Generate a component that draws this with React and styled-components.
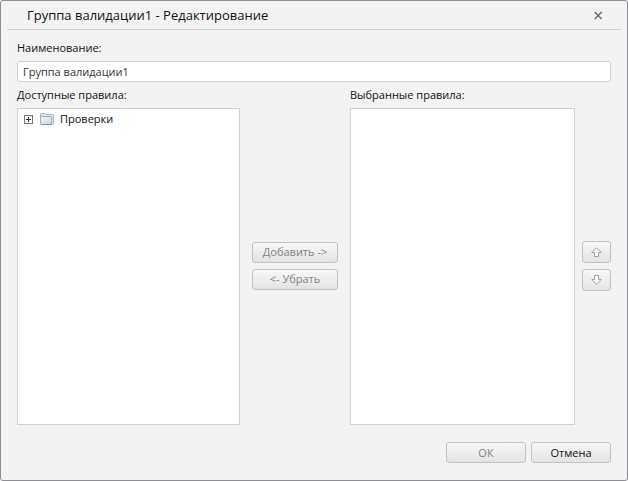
import { useState } from "react";
import styled, { createGlobalStyle } from "styled-components";

const color_page = "#f3f3f3";
const color_frame = "#8b8e96";
const color_line = "#d0d3d5";
const color_button_border = "#c0c3c6";
const color_text = "#111111";
const color_disabled = "#838383";
const body_small = "11px";
const body_title = "13px";

const GlobalStyle = createGlobalStyle`
  *,
  *::before,
  *::after {
    box-sizing: border-box;
  }

  body {
    margin: 0;
    background-color: ${color_page};
    color: ${color_text};
    font-family: "Open Sans", "Noto Sans", sans-serif;
    font-size: ${body_small};
    line-height: 16px;
  }

  button,
  input {
    font: inherit;
    color: inherit;
  }
`;

const Dialog = styled.form`
  display: flex;
  flex-direction: column;
  min-height: 100vh;
  border: 1px solid ${color_frame};
  border-radius: 3px;
  padding: 0 6px 17px;
  background-color: ${color_page};
`;

const Header = styled.header`
  display: flex;
  align-items: center;
  justify-content: space-between;
  height: 29px;
  padding: 0 18px 0 20px;
  border-bottom: 1px solid ${color_line};
`;

const Title = styled.h1`
  margin: 0;
  font-size: ${body_title};
  font-weight: 400;
  line-height: 18px;
`;

const CloseButton = styled.button`
  display: flex;
  padding: 0;
  border: 0;
  background: none;
  color: #666666;
`;

const Body = styled.div`
  flex: 1;
  display: flex;
  flex-direction: column;
  padding: 10px 10px 0;
`;

const Label = styled.label`
  line-height: 16px;
`;

const TextInput = styled.input`
  width: 100%;
  height: 21px;
  margin: 5px 0;
  padding: 0 5px;
  border: 1px solid ${color_line};
  border-radius: 3px;
  background-color: #ffffff;
  color: #333333;

  &:focus {
    outline: none;
  }
`;

const Transfer = styled.div`
  flex: 1;
  display: grid;
  grid-template-columns: 223fr 96px 225fr 29px;
  grid-template-rows: auto 1fr;
  column-gap: 7px;
  row-gap: 5px;
`;

const ColumnTitle = styled.div`
  grid-column: ${(props) => props.$column};
  grid-row: 1;
`;

const List = styled.ul`
  grid-column: ${(props) => props.$column};
  grid-row: 2;
  margin: 0;
  padding: 2px 6px;
  border: 1px solid ${color_line};
  background-color: #ffffff;
  list-style: none;
`;

const TreeNode = styled.li`
  display: flex;
  align-items: center;
  height: 16px;
`;

const Expander = styled.button`
  display: flex;
  margin-right: 7px;
  padding: 0;
  border: 0;
  background: none;
`;

const NodeText = styled.span`
  margin-left: 6px;
`;

const ButtonColumn = styled.div`
  grid-column: ${(props) => props.$column};
  grid-row: 2;
  display: flex;
  flex-direction: column;
  justify-content: center;
  gap: 6px;
  padding: 0 ${(props) => props.$inset || "0"} 2px;
`;

const Button = styled.button`
  display: flex;
  align-items: center;
  justify-content: center;
  width: ${(props) => props.$width || "100%"};
  height: ${(props) => props.$height || "21px"};
  padding: 0;
  border: 1px solid ${color_button_border};
  border-radius: 3px;
  background: linear-gradient(#f8f8f8, #e3e3e3);
  color: ${color_text};

  &:disabled {
    color: ${color_disabled};
  }
`;

const Footer = styled.footer`
  display: flex;
  justify-content: flex-end;
  gap: 5px;
  padding: 17px 10px 0;
`;

const CloseIcon = () => (
  <svg width="9" height="9" viewBox="0 0 9 9" fill="none" stroke="currentColor">
    <path d="M.7 1l7 7M7.700 1l-7 7" strokeWidth="1.3" />
  </svg>
);

const ExpanderIcon = ({ open }) => (
  <svg width="9" height="9" viewBox="0 0 9 9" shapeRendering="crispEdges">
    <rect x="0.5" y="0.5" width="8" height="8" fill="#ffffff" stroke="#777777" />
    <path d={open ? "M2 4.5h5" : "M2 4.5h5M4.5 2v5"} stroke="#333333" />
  </svg>
);

const FolderIcon = () => (
  <svg width="14" height="14" viewBox="0 0 14 14">
    <defs>
      <linearGradient id="folder" x1="0" y1="0" x2="1" y2="1">
        <stop offset="0" stopColor="#f3f5f9" />
        <stop offset="1" stopColor="#cdd6e1" />
      </linearGradient>
    </defs>
    <path d="M.5 11V2l.5-.5h4l1 1h7l.5.5v8.500l-1 1h-3z" fill="#dfe5ec" stroke="#a9b2be" />
    <path d="M.5 4.500h10.500l.5.5v7.500H1l-.5-.5z" fill="url(#folder)" stroke="#a3aebc" />
    <path d="M1 12.500h11" stroke="#8593a6" />
  </svg>
);

const ArrowIcon = ({ down }) => (
  <svg width="11" height="10" viewBox="0 0 11 10" fill="#fafafa" stroke="#a0a0a0">
    <path
      d={
        down
          ? "M3.500.5h4v4h2.700L5.500 9.200.8 4.500h2.700z"
          : "M3.500 9.500h4v-4h2.700L5.500.8.8 5.500h2.700z"
      }
    />
  </svg>
);

const App = () => {
  const [name, setName] = useState("Группа валидации1");
  const [open, setOpen] = useState(false);

  return (
    <>
      <GlobalStyle />
      <Dialog
        role="dialog"
        aria-labelledby="title"
        onSubmit={(event) => event.preventDefault()}
      >
        <Header>
          <Title id="title">Группа валидации1 - Редактирование</Title>
          <CloseButton type="button" aria-label="Закрыть">
            <CloseIcon />
          </CloseButton>
        </Header>
        <Body>
          <Label htmlFor="name">Наименование:</Label>
          <TextInput
            id="name"
            type="text"
            value={name}
            onChange={(event) => setName(event.target.value)}
          />
          <Transfer>
            <ColumnTitle id="available" $column={1}>
              Доступные правила:
            </ColumnTitle>
            <List $column={1} aria-labelledby="available">
              <TreeNode>
                <Expander
                  type="button"
                  aria-label="Развернуть"
                  aria-expanded={open}
                  onClick={() => setOpen(!open)}
                >
                  <ExpanderIcon open={open} />
                </Expander>
                <FolderIcon />
                <NodeText>Проверки</NodeText>
              </TreeNode>
            </List>
            <ButtonColumn $column={2} $inset="5px">
              <Button type="button" disabled>
                Добавить -&gt;
              </Button>
              <Button type="button" disabled>
                &lt;- Убрать
              </Button>
            </ButtonColumn>
            <ColumnTitle id="selected" $column={3}>
              Выбранные правила:
            </ColumnTitle>
            <List $column={3} aria-labelledby="selected" />
            <ButtonColumn $column={4}>
              <Button type="button" $height="22px" aria-label="Вверх" disabled>
                <ArrowIcon />
              </Button>
              <Button type="button" $height="22px" aria-label="Вниз" disabled>
                <ArrowIcon down />
              </Button>
            </ButtonColumn>
          </Transfer>
        </Body>
        <Footer>
          <Button type="submit" $width="80px" disabled>
            ОК
          </Button>
          <Button type="button" $width="80px">
            Отмена
          </Button>
        </Footer>
      </Dialog>
    </>
  );
};

export default App;
